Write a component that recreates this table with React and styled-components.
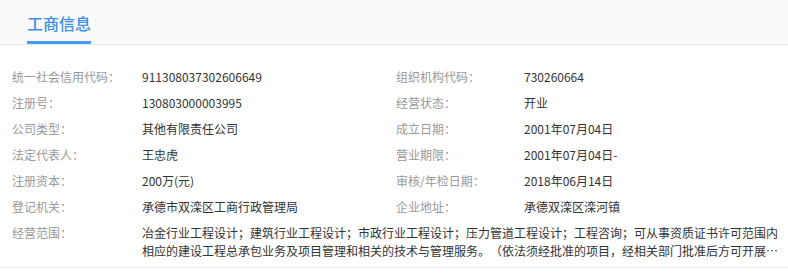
import React from 'react';
import styled, { createGlobalStyle } from 'styled-components';

const GlobalStyle = createGlobalStyle`
  body {
    margin: 0;
    background: #fff;
    font-family: "Noto Sans CJK SC", "Noto Sans", sans-serif;
    text-spacing-trim: space-all;
  }
`;

const Panel = styled.section`
  width: 788px;
  background: #fff;
`;

const Header = styled.div`
  height: 45px;
  box-sizing: border-box;
  padding-left: 27px;
  background: #fafafa;
  border-bottom: 1px solid #e8e8e8;
  display: flex;
`;

const Tab = styled.div`
  height: 44px;
  box-sizing: border-box;
  padding-top: 4px;
  display: flex;
  align-items: center;
  font-size: 16px;
  font-weight: 500;
  color: #3a8ee8;
  border-bottom: 3px solid #439cf2;
`;

const Body = styled.div`
  padding: 19px 8px 3px 12px;
  border-bottom: 1px solid #eeeeee;
  display: grid;
  grid-template-columns: 130px 254px 128px 1fr;
  font-size: 12px;
  line-height: 18px;
`;

const Label = styled.div`
  padding: 4px 0;
  color: #999999;
  white-space: nowrap;
`;

const Value = styled.div`
  padding: 4px 0;
  color: #333333;
  white-space: nowrap;
  grid-column: ${(p) => (p.$wide ? '2 / 5' : 'auto')};
`;

const Clamp = styled.div`
  white-space: normal;
  display: -webkit-box;
  -webkit-box-orient: vertical;
  -webkit-line-clamp: 2;
  overflow: hidden;
`;

const rows = [
  ['统一社会信用代码：', '911308037302606649', '组织机构代码：', '730260664'],
  ['注册号：', '130803000003995', '经营状态：', '开业'],
  ['公司类型：', '其他有限责任公司', '成立日期：', '2001年07月04日'],
  ['法定代表人：', '王忠虎', '营业期限：', '2001年07月04日-'],
  ['注册资本：', '200万(元)', '审核/年检日期：', '2018年06月14日'],
  ['登记机关：', '承德市双滦区工商行政管理局', '企业地址：', '承德双滦区滦河镇'],
];

const scope = '冶金行业工程设计；建筑行业工程设计；市政行业工程设计；压力管道工程设计；工程咨询；可从事资质证书许可范围内相应的建设工程总承包业务及项目管理和相关的技术与管理服务。（依法须经批准的项目，经相关部门批准后方可开展经营活动）';

function App() {
  return (
    <>
      <GlobalStyle />
      <Panel>
        <Header>
          <Tab>工商信息</Tab>
        </Header>
        <Body>
          {rows.map(([l1, v1, l2, v2]) => (
            <React.Fragment key={l1}>
              <Label>{l1}</Label>
              <Value>{v1}</Value>
              <Label>{l2}</Label>
              <Value>{v2}</Value>
            </React.Fragment>
          ))}
          <Label>经营范围：</Label>
          <Value $wide>
            <Clamp>{scope}</Clamp>
          </Value>
        </Body>
      </Panel>
    </>
  );
}

export default App;
